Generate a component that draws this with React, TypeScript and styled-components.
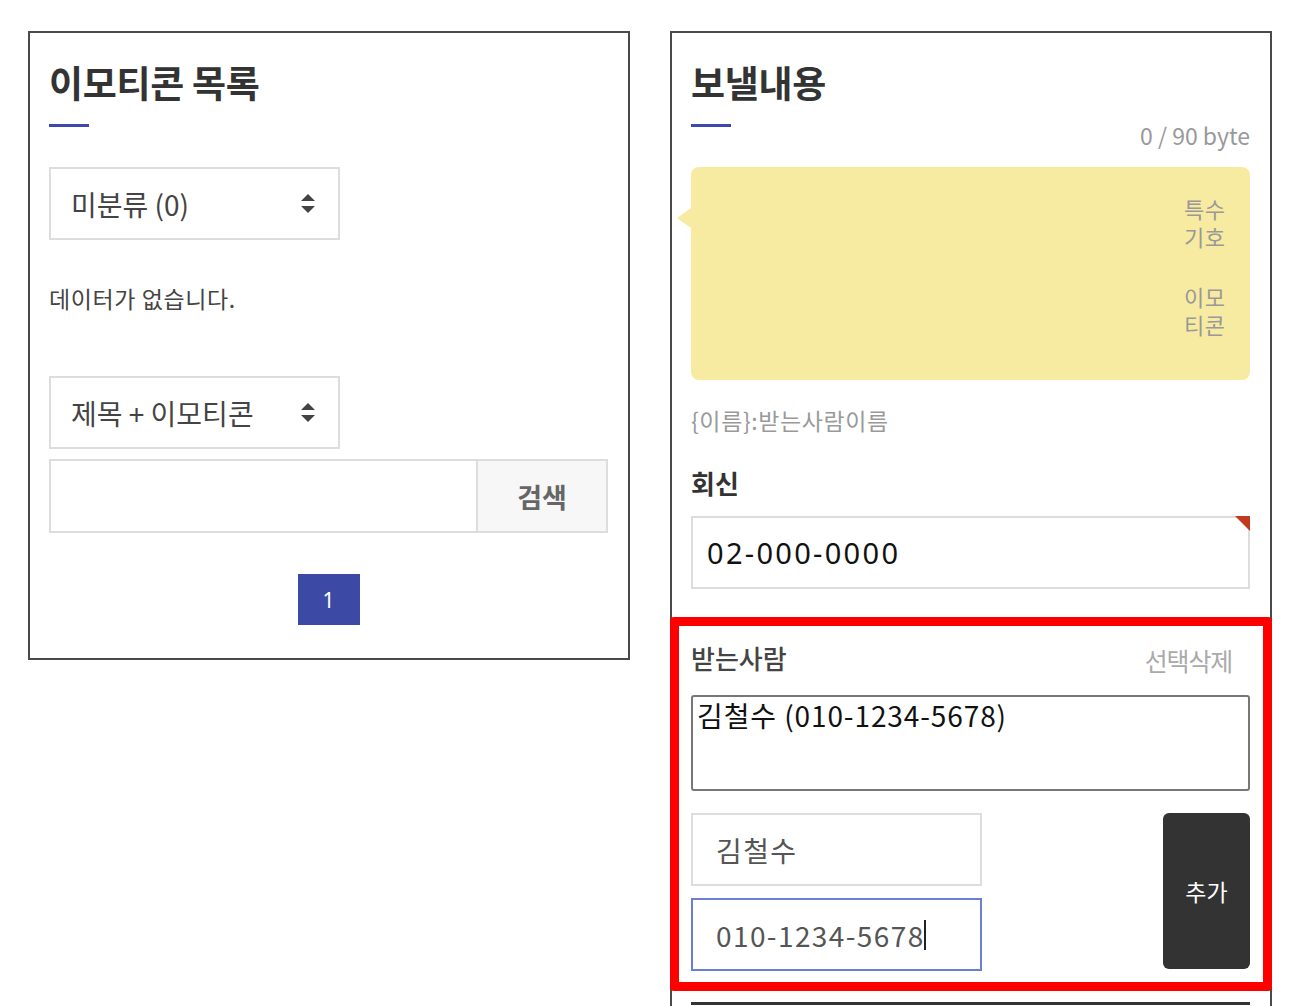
import React from "react";
import styled, { createGlobalStyle } from "styled-components";

const Global = createGlobalStyle`
  html, body { margin: 0; padding: 0; background: #fff; }
  body { font-family: "Noto Sans CJK KR", "Noto Sans", sans-serif; color: #333; }
  * { box-sizing: border-box; }
`;

const Page = styled.div`
  display: flex;
  align-items: flex-start;
  gap: 40px;
  padding: 31px 0 0 28px;
`;

const Panel = styled.section`
  width: 602px;
  border: 2px solid #4a4a4a;
  padding: 0 20px 33px 19px;
  display: flex;
  flex-direction: column;
  align-items: stretch;
`;

const Title = styled.h2`
  margin: 29px 0 0;
  font-size: 37px;
  line-height: 40px;
  font-weight: 700;
  letter-spacing: -0.3px;
  color: #333;
`;

const Accent = styled.div`
  width: 40px;
  height: 3px;
  background: #3d49ae;
`;

const TitleRule = styled(Accent)`
  margin-top: 22px;
`;

const SelectBox = styled.div<{ $mt: number }>`
  margin-top: ${(p) => p.$mt}px;
  width: 291px;
  height: 73px;
  border: 2px solid #ddd;
  display: flex;
  align-items: center;
  justify-content: space-between;
  padding: 0 22px 0 20px;
  font-size: 28px;
  color: #444;
`;

const Empty = styled.p`
  margin: 43px 0 0;
  font-size: 23px;
  line-height: 30px;
  letter-spacing: 0.6px;
  color: #444;
`;

const SearchRow = styled.div`
  margin-top: 10px;
  height: 74px;
  border: 2px solid #ddd;
  display: flex;
`;

const SearchField = styled.div`
  flex: 1;
`;

const SearchButton = styled.button`
  width: 130px;
  border: 0;
  border-left: 2px solid #ddd;
  background: #f7f7f7;
  font-family: inherit;
  font-size: 27px;
  font-weight: 700;
  color: #666;
  padding: 0;
`;

const Pager = styled.div`
  margin-top: 41px;
  display: flex;
  justify-content: center;
`;

const PageNum = styled.span`
  width: 62px;
  height: 51px;
  background: #3c4aa6;
  color: #fff;
  font-family: "Noto Sans", sans-serif;
  font-size: 21px;
  display: flex;
  align-items: center;
  justify-content: center;
`;

const MetaRow = styled.div`
  display: flex;
  justify-content: space-between;
  align-items: flex-start;
  margin-top: 22px;
`;

const ByteCount = styled.span`
  margin-top: -1px;
  font-size: 23px;
  line-height: 24px;
  color: #999;
`;

const Bubble = styled.div`
  position: relative;
  margin-top: 20px;
  height: 213px;
  background: #f7eba1;
  border-radius: 8px;
  display: flex;
  flex-direction: column;
  align-items: flex-end;
  gap: 32px;
  padding: 27px 22px 0 0;
  &::before {
    content: "";
    position: absolute;
    left: -14px;
    top: 41px;
    border-style: solid;
    border-width: 10px 14px 10px 0;
    border-color: transparent #f7eba1 transparent transparent;
  }
`;

const BubbleTool = styled.span`
  width: 44px;
  font-size: 22px;
  line-height: 28px;
  letter-spacing: 0.5px;
  color: #999;
  word-break: break-all;
`;

const Hint = styled.p`
  margin: 25px 0 0;
  font-size: 23px;
  line-height: 30px;
  letter-spacing: 0.6px;
  color: #999;
`;

const Label = styled.h3`
  margin: 32px 0 0;
  font-size: 26px;
  line-height: 32px;
  font-weight: 700;
  color: #333;
`;

const Field = styled.div<{ $focus?: boolean }>`
  position: relative;
  height: 73px;
  border: 2px solid ${(p) => (p.$focus ? "#6a7ed3" : "#ddd")};
  display: flex;
  align-items: center;
`;

const ReplyField = styled(Field)`
  margin-top: 17px;
  padding-left: 14px;
  font-family: "Noto Sans", sans-serif;
  font-size: 29px;
  letter-spacing: 2.3px;
  color: #111;
  &::after {
    content: "";
    position: absolute;
    top: -2px;
    right: -2px;
    border-style: solid;
    border-width: 0 15px 15px 0;
    border-color: transparent #c1391f transparent transparent;
  }
`;

const Highlight = styled.div`
  margin: 28px -22px 0 -21px;
  border: 9px solid #ff0000;
  border-radius: 4px;
  padding: 15px 13px 11px 12px;
`;

const RecvHead = styled.div`
  display: flex;
  justify-content: space-between;
  align-items: center;
  height: 32px;
`;

const RecvLabel = styled.span`
  font-size: 26px;
  font-weight: 500;
  color: #444;
`;

const DeleteLink = styled.span`
  font-size: 25px;
  letter-spacing: -1.2px;
  color: #aaa;
  margin-right: 18px;
  margin-top: 6px;
`;

const RecvList = styled.div`
  margin-top: 22px;
  height: 96px;
  border: 2px solid #777;
  border-radius: 3px;
  padding: 1px 4px;
  font-size: 28px;
  line-height: 34px;
  letter-spacing: 0.9px;
  color: #111;
`;

const AddRow = styled.div`
  margin-top: 22px;
  display: flex;
  justify-content: space-between;
  align-items: flex-start;
`;

const AddInputs = styled.div`
  display: flex;
  flex-direction: column;
  gap: 12px;
  width: 291px;
`;

const AddField = styled(Field)`
  padding-left: 23px;
  font-size: 28px;
  letter-spacing: 1.4px;
  color: #555;
`;

const Caret = styled.span`
  display: inline-block;
  width: 2px;
  height: 30px;
  background: #222;
  margin-left: -1px;
`;

const AddButton = styled.button`
  width: 87px;
  height: 156px;
  border: 0;
  border-radius: 6px;
  background: #333;
  color: #fff;
  font-family: inherit;
  font-size: 23px;
  padding: 0;
`;

const TableTop = styled.div`
  margin: 11px 0 0;
  height: 120px;
  border-top: 3px solid #333;
`;

const Arrows = () => (
  <svg width="16" height="22" viewBox="0 0 16 22">
    <path d="M8 1 L15 8 L1 8 Z" fill="#444" />
    <path d="M1 13 L15 13 L8 20 Z" fill="#444" />
  </svg>
);

export default function App() {
  return (
    <>
      <Global />
      <Page>
        <Panel>
          <Title>이모티콘 목록</Title>
          <TitleRule />
          <SelectBox $mt={40}>
            <span>미분류 (0)</span>
            <Arrows />
          </SelectBox>
          <Empty>데이터가 없습니다.</Empty>
          <SelectBox $mt={63}>
            <span>제목 + 이모티콘</span>
            <Arrows />
          </SelectBox>
          <SearchRow>
            <SearchField />
            <SearchButton>검색</SearchButton>
          </SearchRow>
          <Pager>
            <PageNum>1</PageNum>
          </Pager>
        </Panel>
        <Panel>
          <Title>보낼내용</Title>
          <MetaRow>
            <Accent />
            <ByteCount>0 / 90 byte</ByteCount>
          </MetaRow>
          <Bubble>
            <BubbleTool>특수기호</BubbleTool>
            <BubbleTool>이모티콘</BubbleTool>
          </Bubble>
          <Hint>{"{이름}:받는사람이름"}</Hint>
          <Label>회신</Label>
          <ReplyField>02-000-0000</ReplyField>
          <Highlight>
            <RecvHead>
              <RecvLabel>받는사람</RecvLabel>
              <DeleteLink>선택삭제</DeleteLink>
            </RecvHead>
            <RecvList>김철수 (010-1234-5678)</RecvList>
            <AddRow>
              <AddInputs>
                <AddField>김철수</AddField>
                <AddField $focus>
                  010-1234-5678
                  <Caret />
                </AddField>
              </AddInputs>
              <AddButton>추가</AddButton>
            </AddRow>
          </Highlight>
          <TableTop />
        </Panel>
      </Page>
    </>
  );
}
